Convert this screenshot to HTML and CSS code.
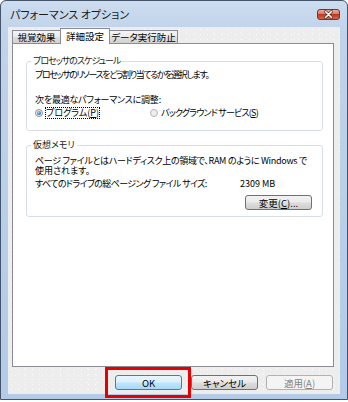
FILE: index.html
```html
<!DOCTYPE html>
<html lang="ja">
<head>
<meta charset="utf-8">
<link rel="stylesheet" href="styles.css">
</head>
<body>
<div class="window">
  <div class="titlebar">
    <span class="title">パフォーマンス オプション</span>
    <span class="close">
      <svg width="23" height="11" viewBox="0 0 23 11">
        <defs>
          <linearGradient id="cg" x1="0" y1="0" x2="0" y2="1">
            <stop offset="0" stop-color="#eab3a6"/>
            <stop offset="0.45" stop-color="#d47a66"/>
            <stop offset="0.5" stop-color="#c0391f"/>
            <stop offset="1" stop-color="#d9694a"/>
          </linearGradient>
        </defs>
        <rect x="0.5" y="0.5" width="22" height="10" rx="2.5" fill="url(#cg)" stroke="#7b3328"/>
        <path d="M8.5 2.5 L14.5 8.5 M14.5 2.5 L8.5 8.5" stroke="#5a2a22" stroke-width="3" stroke-linecap="round"/>
        <path d="M8.5 2.5 L14.5 8.5 M14.5 2.5 L8.5 8.5" stroke="#ffffff" stroke-width="1.6" stroke-linecap="round"/>
      </svg>
    </span>
  </div>
  <div class="client">
    <div class="tabs">
      <div class="tab t1">視覚効果</div>
      <div class="tab t2 active">詳細設定</div>
      <div class="tab t3">データ実行防止</div>
    </div>
    <div class="pane">
      <fieldset class="group g1">
        <legend class="lg1">プロセッサのスケジュール</legend>
        <p class="l1">プロセッサのリソースをどう割り当てるかを選択します。</p>
        <p class="l2">次を最適なパフォーマンスに調整:</p>
        <div class="radios">
          <div class="radio r1"><span class="dot on"></span><span class="focus">プログラム(<u>P</u>)</span></div>
          <div class="radio r2"><span class="dot"></span><span>バックグラウンド サービス(<u>S</u>)</span></div>
        </div>
      </fieldset>
      <fieldset class="group g2">
        <legend>仮想メモリ</legend>
        <p class="m1">ページ ファイルとはハードディスク上の領域で、RAM のように Windows で</p>
        <p class="m2">使用されます。</p>
        <div class="size"><span class="sl">すべてのドライブの総ページング ファイル サイズ:</span><span class="mb">2309 MB</span></div>
        <div class="change"><button class="btn">変更(<u>C</u>)...</button></div>
      </fieldset>
    </div>
    <div class="buttons">
      <span class="okwrap"><button class="btn default">OK</button><span class="hl"></span></span>
      <button class="btn">キャンセル</button>
      <button class="btn disabled">適用(<u>A</u>)</button>
    </div>
  </div>
</div>
</body>
</html>
```

FILE: styles.css
```css
* { box-sizing: border-box; }

body {
  margin: 0;
  background: #ffffff;
  font-family: "Noto Sans CJK JP", "Noto Sans", sans-serif;
  font-size: 9px;
  font-feature-settings: "palt";
  color: #000;
  white-space: nowrap;
}

.window {
  width: 348px;
  height: 400px;
  border: 1px solid #44556b;
  border-radius: 6px 6px 0 0;
  background: linear-gradient(180deg, #cddcef 0%, #bfd3ea 8%, #b3cbe7 100%);
  display: flex;
  flex-direction: column;
}

.titlebar {
  height: 26px;
  display: flex;
  align-items: center;
  justify-content: space-between;
  padding: 0 7px 0 9px;
}

.title {
  font-size: 11px;
  color: #1a1a1a;
}

.close {
  display: flex;
}

.client {
  flex: 1;
  margin: 0 7px 5px 7px;
  background-color: #ededed;
  background-image:
    radial-gradient(circle, #fbfbfb 0.6px, transparent 0.8px),
    radial-gradient(circle, #f8f8f8 0.6px, transparent 0.8px);
  background-size: 7px 5px, 9px 7px;
  background-position: 0 0, 3px 2px;
  display: flex;
  flex-direction: column;
  padding: 1px 6px 0 4px;
}

.tabs {
  height: 15px;
  display: flex;
  align-items: flex-end;
}

.tab {
  height: 13px;
  border: 1px solid #898c95;
  border-bottom: none;
  background: linear-gradient(180deg, #f4f4f4 0%, #ebebeb 50%, #dedede 51%, #d2d2d2 100%);
  text-align: center;
  line-height: 12px;
  font-size: 9.5px;
}

.t1 { width: 48px; border-right: none; }
.t2 { width: 50px; }
.t3 { width: 68px; border-left: none; }

.tab.active {
  height: 16px;
  background: #ffffff;
  margin-bottom: -1px;
  position: relative;
  z-index: 1;
  line-height: 14px;
}

.pane {
  height: 324px;
  background: #ffffff;
  border: 1px solid #898c95;
  padding: 12px 10px 0 13px;
}

.group {
  margin: 0;
  border: 1px solid #d5dfe5;
  border-radius: 3px;
  padding: 0 8px 12px 8px;
  min-inline-size: 0;
}

.group legend {
  padding: 0 2px;
  margin-left: -4px;
  line-height: 10px;
  color: #1a1a1a;
}

.lg1 { letter-spacing: -1px; }

.group p {
  margin: 0;
  line-height: 10px;
}

.l1 { margin-top: 4px !important; letter-spacing: -1.4px; }
.l2 { margin-top: 15px !important; letter-spacing: -0.2px; }

.radios {
  display: flex;
  margin-top: 3px;
  line-height: 10px;
}

.radio {
  display: flex;
  align-items: center;
  gap: 3px;
}

.r1 { width: 115px; }
.r2 { letter-spacing: -0.8px; }

.dot {
  width: 8px;
  height: 8px;
  border-radius: 50%;
  border: 1px solid #8e8f8f;
  background: radial-gradient(circle at 50% 40%, #ffffff 0%, #e4e4e4 100%);
  display: flex;
  align-items: center;
  justify-content: center;
}

.dot.on::after {
  content: "";
  width: 4px;
  height: 4px;
  border-radius: 50%;
  background: radial-gradient(circle at 40% 35%, #9fd3f6 0%, #2c7bc4 60%, #145490 100%);
}

.dot:not(.on) { border-color: #b6b6b6; background: #eeeeee; }

.focus {
  outline: 1px dotted #000;
  outline-offset: 0;
}

.g2 {
  margin-top: 9px;
  padding-bottom: 6px;
}

.m1 { margin-top: 6px !important; letter-spacing: -0.3px; }

.size {
  display: flex;
  margin-top: 3px;
  line-height: 10px;
}

.sl { width: 205px; flex: none; letter-spacing: -0.6px; }

.change {
  display: flex;
  justify-content: flex-end;
  margin-top: 6px;
  padding-right: 2px;
}

.btn {
  width: 67px;
  height: 15px;
  padding: 0;
  border: 1px solid #707070;
  border-radius: 3px;
  background: linear-gradient(180deg, #f2f2f2 0%, #ebebeb 48%, #dddddd 52%, #cfcfcf 100%);
  font-family: "Noto Sans CJK JP", "Noto Sans", sans-serif;
  font-feature-settings: "palt";
  font-size: 9.5px;
  line-height: 12px;
  color: #000;
}

.btn.default {
  border-color: #3c7fb1;
  background: linear-gradient(180deg, #eaf6fd 0%, #d9f0fc 48%, #bee6fd 52%, #a7d9f5 100%);
}

.btn.disabled {
  border-color: #adb2b5;
  background: #f4f4f4;
  color: #838383;
}

.buttons {
  height: 27px;
  display: flex;
  justify-content: flex-end;
  align-items: flex-start;
  gap: 8px;
  padding-top: 8px;
  padding-right: 1px;
}

.okwrap {
  position: relative;
  display: flex;
  margin-right: 1px;
}

.hl {
  position: absolute;
  top: -8px;
  bottom: -8px;
  left: -10px;
  right: -9px;
  border: 3px solid #e60000;
}
```
